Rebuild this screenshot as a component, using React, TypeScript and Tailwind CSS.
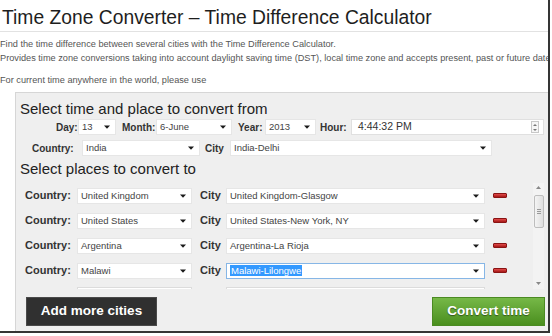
import React from "react";

const font = { fontFamily: '"Liberation Sans", Arial, sans-serif' };

// small black dropdown arrow
const Arrow = () => (
    <svg width="6" height="4" viewBox="0 0 6 4" className="shrink-0">
        <path d="M0 0.5h6L3 3.8z" fill="#1a1a1a" />
    </svg>
);

function Select({ value, w, selected = false }: { value: string; w: string; selected?: boolean }) {
    return (
        <div className={`${w} h-[16px] bg-white flex items-center justify-between pl-[3px] pr-[5px] text-[9.5px] font-normal text-[#444] leading-none ${selected ? "border border-[#86b6e6]" : "border border-[#e6e6e6]"}`}>
            {selected ? <span className="bg-[#3399ff] text-white px-[1px] py-[1px]">{value}</span> : <span>{value}</span>}
            <Arrow />
        </div>
    );
}

const Minus = () => (
    <div className="w-[14px] h-[5px] rounded-[1px] border border-[#8a1414] bg-gradient-to-b from-[#e24a4a] to-[#a51515]" />
);

export default function App() {

    const rows = [
        { country: "United Kingdom", city: "United Kingdom-Glasgow" },
        { country: "United States", city: "United States-New York, NY" },
        { country: "Argentina", city: "Argentina-La Rioja" },
        { country: "Malawi", city: "Malawi-Lilongwe", selected: true },
    ];

    // ======================================================================
    return (
        <div className="w-[552px] h-[336px] bg-white overflow-hidden" style={font}>
            <div className="w-[550px] h-[333px] border-r-2 border-b-2 border-[#353535] flex flex-col overflow-hidden">

                {/* TITLE */}
                <div className="h-[32px] pt-[7px] pl-[2px] border-b border-[#e2e2e2] text-[19.3px] leading-[22px] text-[#1e1e1e] whitespace-nowrap">
                    Time Zone Converter – Time Difference Calculator
                </div>

                {/* INTRO */}
                <div className="pt-[5px] text-[9.2px] leading-[14px] text-[#555] whitespace-nowrap overflow-hidden">
                    <p>Find the time difference between several cities with the Time Difference Calculator.</p>
                    <p>Provides time zone conversions taking into account daylight saving time (DST), local time zone and accepts present, past or future dates</p>
                    <p className="mt-[8px]">For current time anywhere in the world, please use</p>
                </div>

                {/* PANEL */}
                <div className="mt-[5px] ml-[15px] flex-1 bg-[#efefef] border-l border-t border-[#d6d6d6] pt-[7px] flex flex-col">
                    <div className="pl-[4px] text-[15px] leading-[18px] text-[#222] whitespace-nowrap">Select time and place to convert from</div>

                    {/* date row */}
                    <div className="h-[18px] flex items-center text-[10px] font-bold text-[#333] whitespace-nowrap">
                        <span className="ml-[40px] w-[22px]">Day:</span>
                        <Select value="13" w="w-[38px]" />
                        <span className="ml-[6px] w-[34px]">Month:</span>
                        <Select value="6-June" w="w-[76px]" />
                        <span className="ml-[6px] w-[27px]">Year:</span>
                        <Select value="2013" w="w-[51px]" />
                        <span className="ml-[4px] w-[31px]">Hour:</span>
                        <div className="w-[193px] h-[16px] bg-white border border-[#e0e0e0] flex items-center justify-between pl-[6px] pr-[4px]">
                            <span className="text-[10.5px] font-normal text-[#333]">4:44:32 PM</span>
                            <div className="w-[8px] h-[12px] border border-[#c8c8c8] flex flex-col items-center justify-around bg-[#f6f6f6]">
                                <svg width="4" height="2" viewBox="0 0 4 2"><path d="M0 2h4L2 0z" fill="#777" /></svg>
                                <svg width="4" height="2" viewBox="0 0 4 2"><path d="M0 0h4L2 2z" fill="#777" /></svg>
                            </div>
                        </div>
                    </div>

                    {/* from country row */}
                    <div className="mt-[2px] h-[20px] flex items-center text-[10px] font-bold text-[#333] whitespace-nowrap">
                        <span className="ml-[16px] w-[50px]">Country:</span>
                        <Select value="India" w="w-[118px]" />
                        <span className="ml-[5px] w-[25px]">City</span>
                        <Select value="India-Delhi" w="w-[262px]" />
                    </div>

                    <div className="pl-[4px] h-[22px] text-[15px] leading-[22px] text-[#222] whitespace-nowrap">Select places to convert to</div>

                    {/* LIST */}
                    <div className="mt-[3px] h-[106px] flex overflow-hidden">
                        <div className="flex-1 flex flex-col">
                            {rows.map((row, i) => (
                                <div key={i} className="h-[25px] shrink-0 flex items-center pl-[9px] text-[11px] font-bold text-[#333] whitespace-nowrap">
                                    <span className="w-[52px]">Country:</span>
                                    <Select value={row.country} w="w-[115px]" />
                                    <span className="ml-[8px] w-[26px]">City</span>
                                    <Select value={row.city} w="w-[259px]" selected={row.selected} />
                                    <div className="ml-[8px]"><Minus /></div>
                                </div>
                            ))}
                            {/* next row, scrolled out of view: only the tops of its boxes show */}
                            <div className="pt-[4px] flex pl-[61px]">
                                <div className="w-[115px] h-[16px] bg-white border border-[#dcdcdc]" />
                                <div className="ml-[34px] w-[259px] h-[16px] bg-white border border-[#dcdcdc]" />
                            </div>
                        </div>
                        {/* scrollbar */}
                        <div className="w-[11px] mr-[4px] flex flex-col items-center bg-[#f3f3f3]">
                            <svg width="5" height="3" viewBox="0 0 5 3" className="mt-[3px]"><path d="M0 3h5L2.5 0z" fill="#888" /></svg>
                            <div className="mt-[6px] w-[10px] h-[33px] rounded-[2px] border border-[#bdbdbd] bg-gradient-to-r from-[#f4f4f4] to-[#dedede] flex flex-col items-center justify-center gap-[1px]">
                                <div className="w-[4px] h-px bg-[#999]" />
                                <div className="w-[4px] h-px bg-[#999]" />
                                <div className="w-[4px] h-px bg-[#999]" />
                            </div>
                            <svg width="5" height="3" viewBox="0 0 5 3" className="mt-auto mb-[4px]"><path d="M0 0h5L2.5 3z" fill="#888" /></svg>
                        </div>
                    </div>

                    {/* BUTTONS */}
                    <div className="mt-[8px] flex justify-between pl-[10px] pr-[3px]">
                        <div className="w-[131px] h-[29px] bg-[#303030] border border-[#4a4a4a] flex items-center justify-center text-white font-bold text-[13.5px]">
                            Add more cities
                        </div>
                        <div className="w-[113px] h-[29px] bg-gradient-to-b from-[#76b847] to-[#4a8f1d] border border-[#4b8a22] flex items-center justify-center text-white font-bold text-[13.5px] [text-shadow:0_1px_1px_rgba(0,0,0,0.45)]">
                            Convert time
                        </div>
                    </div>
                </div>
            </div>
        </div>
    );
}
